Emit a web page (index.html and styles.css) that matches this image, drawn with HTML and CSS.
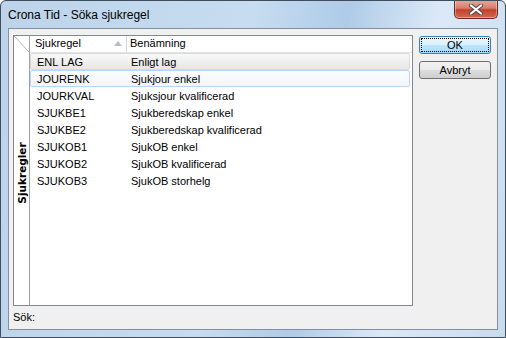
FILE: index.html
```html
<!DOCTYPE html>
<html lang="sv">
<head>
  <meta charset="UTF-8" />
  <title>Crona Tid - Söka sjukregel</title>
  <link rel="stylesheet" href="styles.css">
</head>
<body>
  <div class="window">
    <div class="titlebar">
      <span class="title">Crona Tid - Söka sjukregel</span>
      <button class="close" title="Stäng">
        <svg width="14" height="11" viewBox="0 0 14 11">
          <path d="M2 1.5 L12 9.5 M12 1.5 L2 9.5" stroke="#4a4a4a" stroke-width="4" stroke-linecap="round"/>
          <path d="M2 1.5 L12 9.5 M12 1.5 L2 9.5" stroke="#fff" stroke-width="2.2" stroke-linecap="round"/>
        </svg>
      </button>
    </div>

    <div class="client">
      <div class="main">
        <div class="list">
          <div class="side">
            <div class="corner"></div>
            <div class="tab"><span>Sjukregler</span></div>
          </div>
          <div class="grid">
            <div class="head">
              <div class="col code">Sjukregel <span class="arrow"></span></div>
              <div class="col name">Benämning</div>
            </div>
            <div class="rows" id="rows"></div>
          </div>
        </div>
        <div class="buttons">
          <button class="btn default">OK</button>
          <button class="btn">Avbryt</button>
        </div>
      </div>
      <div class="search">Sök:</div>
    </div>
  </div>

  <script>
    const rules = [
      ["ENL LAG", "Enligt lag"],
      ["JOURENK", "Sjukjour enkel"],
      ["JOURKVAL", "Sjuksjour kvalificerad"],
      ["SJUKBE1", "Sjukberedskap enkel"],
      ["SJUKBE2", "Sjukberedskap kvalificerad"],
      ["SJUKOB1", "SjukOB enkel"],
      ["SJUKOB2", "SjukOB kvalificerad"],
      ["SJUKOB3", "SjukOB storhelg"]
    ];

    const rows = document.getElementById("rows");
    rules.forEach((r, i) => {
      const div = document.createElement("div");
      div.className = "row";
      if (i === 0) div.className += " selected";
      if (i === 1) div.className += " hot";
      div.innerHTML = `<span class="code">${r[0]}</span><span class="name">${r[1]}</span>`;
      rows.appendChild(div);
    });
  </script>
</body>
</html>
```

FILE: styles.css
```css
body {
  margin: 0;
  background: #fff;
  font-family: "Liberation Sans", Arial, sans-serif;
  font-size: 11px;
  color: #000;
}
.window {
  width: 506px;
  height: 338px;
  box-sizing: border-box;
  border: 1px solid #3f4d5e;
  border-radius: 6px 6px 0 0;
  background: linear-gradient(100deg, #bcd3ea 0%, #c7dcf0 45%, #afcbe8 62%, #dbe9f7 78%, #c8dcf0 100%);
  display: flex;
  flex-direction: column;
  overflow: hidden;
}
.titlebar {
  height: 27px;
  display: flex;
  align-items: flex-start;
  justify-content: space-between;
  padding: 0 7px 0 7px;
}
.title {
  font-size: 12px;
  margin-top: 7px;
  color: #000;
}
.close {
  width: 44px;
  height: 19px;
  margin-top: -1px;
  border: 1px solid #6b2a22;
  border-top: none;
  border-radius: 0 0 5px 5px;
  background: linear-gradient(#e9a99b 0%, #d67d6d 45%, #c0402c 55%, #d36a4f 100%);
  box-shadow: inset 0 0 0 1px rgba(255,255,255,0.35);
  padding: 0;
  display: flex;
  align-items: center;
  justify-content: center;
}
.client {
  flex: 1;
  margin: 0 7px 7px 7px;
  border: 1px solid #84909d;
  background: #f0f0f0;
  padding: 6px 5px 0 4px;
  display: flex;
  flex-direction: column;
}
.main {
  display: flex;
  gap: 6px;
}
.list {
  width: 400px;
  height: 271px;
  box-sizing: border-box;
  border: 1px solid #828790;
  background: #fff;
  display: flex;
}
.side {
  width: 15px;
  border-right: 1px solid #a0a0a0;
  display: flex;
  flex-direction: column;
}
.corner {
  height: 16px;
  background: linear-gradient(to top right, #fff calc(50% - 0.6px), #a0a0a0 50%, #fff calc(50% + 0.6px));
}
.tab {
  flex: 1;
  position: relative;
}
.tab span {
  position: absolute;
  left: 50%;
  top: 115px;
  transform: translateX(-50%) rotate(-90deg);
  font-family: "DejaVu Sans", sans-serif;
  font-weight: bold;
  font-size: 10.5px;
  white-space: nowrap;
}
.grid {
  flex: 1;
  display: flex;
  flex-direction: column;
}
.head {
  height: 16px;
  display: flex;
  border-bottom: 1px solid #e5e5e5;
}
.head .col {
  line-height: 15px;
  padding-left: 3px;
}
.head .code {
  width: 91px;
  padding-left: 5px;
  border-right: 1px solid #d5d5d5;
  position: relative;
}
.arrow {
  position: absolute;
  right: 4px;
  top: 5px;
  width: 0;
  height: 0;
  border-left: 4px solid transparent;
  border-right: 4px solid transparent;
  border-bottom: 5px solid #b9bec4;
}
.rows {
  padding: 0 2px 0 0;
}
.row {
  height: 17px;
  box-sizing: border-box;
  display: flex;
  align-items: center;
  border: 1px solid transparent;
  border-radius: 2px;
}
.row .code {
  width: 94px;
  padding-left: 6px;
}
.row.selected {
  background: linear-gradient(#f9f9f9, #e6e6e6);
  border-color: #d9d9d9;
}
.row.hot {
  background: linear-gradient(#fbfcfe, #f1f6fd);
  border-color: #b8d6fb;
}
.buttons {
  display: flex;
  flex-direction: column;
  gap: 7px;
  padding-top: 1px;
}
.btn {
  width: 72px;
  height: 18px;
  font-family: "Liberation Sans", Arial, sans-serif;
  font-size: 11px;
  color: #000;
  border: 1px solid #707070;
  border-radius: 3px;
  background: linear-gradient(#f2f2f2 0%, #ebebeb 50%, #dddddd 51%, #cfcfcf 100%);
  padding: 0;
}
.btn.default {
  border-color: #3c7fb1;
  background: linear-gradient(#eaf6fd 0%, #d9f0fc 50%, #bee6fd 51%, #a7d9f5 100%);
  outline: 1px dotted #000;
  outline-offset: -3px;
}
.search {
  margin-top: 5px;
}
```
